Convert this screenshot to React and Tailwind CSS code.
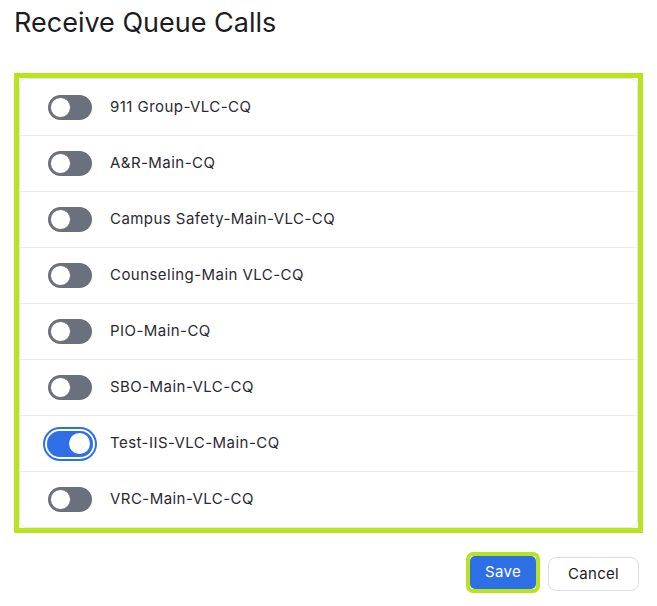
import React from "react";

const items = [
  { name: "911 Group-VLC-CQ", on: false },
  { name: "A&R-Main-CQ", on: false },
  { name: "Campus Safety-Main-VLC-CQ", on: false },
  { name: "Counseling-Main VLC-CQ", on: false },
  { name: "PIO-Main-CQ", on: false },
  { name: "SBO-Main-VLC-CQ", on: false },
  { name: "Test-IIS-VLC-Main-CQ", on: true },
  { name: "VRC-Main-VLC-CQ", on: false },
];

function Toggle({ on }) {
  if (on) {
    return (
      <div className="rounded-full ring-2 ring-[#2f6fe6] ring-offset-2 ring-offset-white">
        <div className="w-[46px] h-[26px] rounded-full bg-[#2f6fe6] flex items-center justify-end px-[3px]">
          <div className="w-[21px] h-[21px] rounded-full bg-white" />
        </div>
      </div>
    );
  }
  return (
    <div className="w-[44px] h-[25px] rounded-full bg-[#6b717c] flex items-center px-[2px]">
      <div className="w-[21px] h-[21px] rounded-full bg-white border border-[#6b717c]" />
    </div>
  );
}

export default function App() {
  return (
    <div
      className="w-[657px] h-[606px] bg-white flex flex-col px-[14px]"
      style={{ fontFamily: "Inter, 'Noto Sans', sans-serif" }}
    >
      <h1 className="text-[27px] leading-[36px] text-[#1c1c1f] mt-[5px]">
        Receive Queue Calls
      </h1>
      <div className="mt-[32px] w-[629px] border-[5px] border-[#b7e41f]">
        <div className="border border-[#e5e7eb] rounded-lg">
          {items.map((it, i) => (
            <div
              key={it.name}
              className={`h-[56px] flex items-center pl-[28px] gap-[18px] ${
                i > 0 ? "border-t border-[#ececf0]" : ""
              }`}
            >
              <div className="w-[44px] flex justify-center">
                <Toggle on={it.on} />
              </div>
              <span className="text-[15px] text-[#2a2a33] tracking-[0.45px]">{it.name}</span>
            </div>
          ))}
        </div>
      </div>
      <div className="flex justify-end gap-[8px] mt-[19px] pr-[4px]">
        <div className="rounded-[7px] border-[4px] border-[#b7e41f] p-0">
          <button className="h-[33px] w-[66px] rounded-[5px] bg-[#2f6fe6] text-white text-[15px] tracking-[0.3px]">
            Save
          </button>
        </div>
        <button className="mt-[5px] h-[34px] w-[91px] rounded-lg border border-[#dcdde3] bg-white text-[15px] text-[#1c1c24] tracking-[0.3px]">
          Cancel
        </button>
      </div>
    </div>
  );
}
